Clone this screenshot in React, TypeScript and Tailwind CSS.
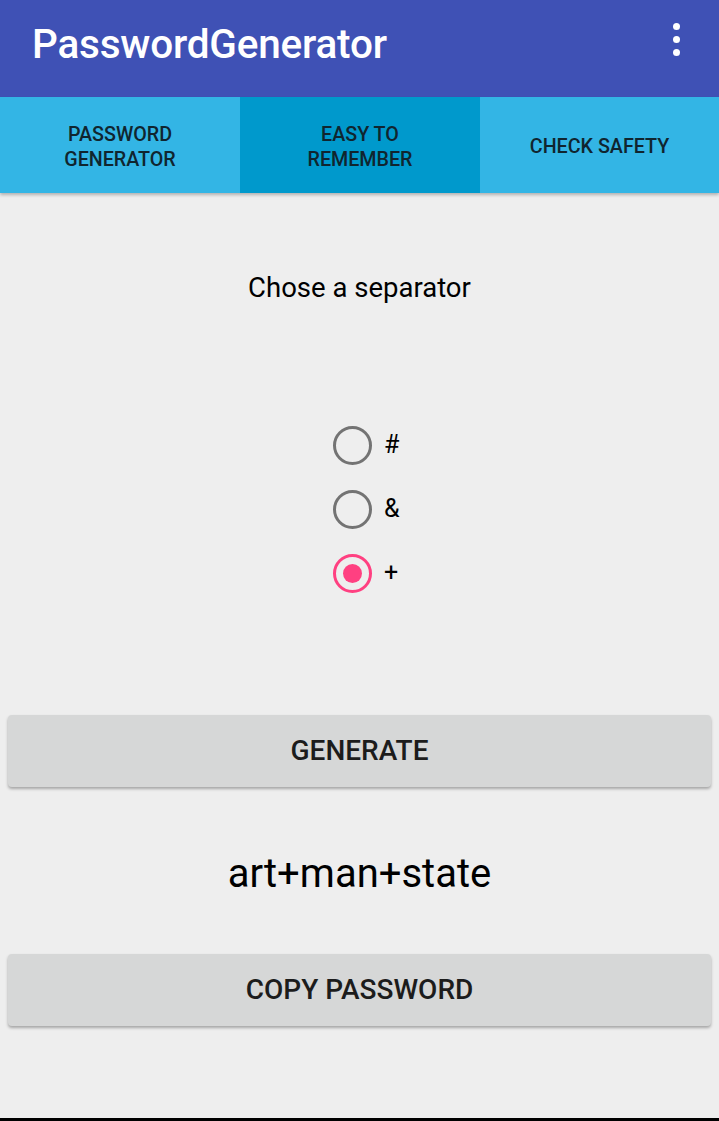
import { useState } from 'react';

const font = { fontFamily: 'Roboto, "Noto Sans", sans-serif' };

function Radio({ label, checked, onClick }: { label: string; checked: boolean; onClick: () => void }) {
  return (
    <button onClick={onClick} className="flex items-center h-16 gap-3">
      {checked ? (
        <span className="w-[39px] h-[39px] rounded-full border-[3px] border-[#FF4081] flex items-center justify-center">
          <span className="w-[19px] h-[19px] rounded-full bg-[#FF4081]" />
        </span>
      ) : (
        <span className="w-[39px] h-[39px] rounded-full border-[3px] border-[#737373]" />
      )}
      <span className="text-[25px] text-black w-6 text-left">{label}</span>
    </button>
  );
}

export default function App() {
  const [sep, setSep] = useState('+');
  const tabs = ['PASSWORD\nGENERATOR', 'EASY TO\nREMEMBER', 'CHECK SAFETY'];

  return (
    <div style={font} className="w-[719px] h-[1121px] bg-[#EEEEEE] flex flex-col overflow-hidden">
      <div className="h-[97px] bg-[#3F51B5] flex items-center justify-between pl-[32px] pr-[39px] pb-[8px]">
        <h1 className="text-white text-[40.5px] font-medium tracking-[-0.2px]">PasswordGenerator</h1>
        <div className="flex flex-col gap-[6px] mb-[10px]">
          <span className="w-[7px] h-[7px] rounded-full bg-white" />
          <span className="w-[7px] h-[7px] rounded-full bg-white" />
          <span className="w-[7px] h-[7px] rounded-full bg-white" />
        </div>
      </div>

      <div className="h-[96px] grid grid-cols-[240px_240px_239px] shadow-[0_2px_3px_rgba(0,0,0,0.25)] relative z-10">
        {tabs.map((t, i) => (
          <div
            key={t}
            className={`flex items-center justify-center text-center whitespace-pre-line text-[19.7px] leading-[25px] font-medium text-[#10252f] pt-[3px] ${
              i === 1 ? 'bg-[#0099CC]' : 'bg-[#33B5E5]'
            }`}
          >
            {t}
          </div>
        ))}
      </div>

      <div className="flex flex-col items-center">
        <p className="mt-[77px] text-[27.5px] leading-[36px] text-black">Chose a separator</p>

        <div className="mt-[107px] flex flex-col items-start ml-[22px]">
          {['#', '&', '+'].map((s) => (
            <Radio key={s} label={s} checked={sep === s} onClick={() => setSep(s)} />
          ))}
        </div>
      </div>

      <div className="px-[8px] mt-[110px]">
        <button className="w-full h-[72px] rounded-[4px] bg-[#D6D7D7] shadow-[0_2px_3px_rgba(0,0,0,0.3)] text-[28px] font-medium text-[#1c1c1c]">
          GENERATE
        </button>
      </div>

      <p className="text-center text-[40px] text-black mt-[63px] leading-[48px]">art{sep}man{sep}state</p>

      <div className="px-[8px] mt-[56px]">
        <button className="w-full h-[72px] rounded-[4px] bg-[#D6D7D7] shadow-[0_2px_3px_rgba(0,0,0,0.3)] text-[28px] font-medium text-[#1c1c1c]">
          COPY PASSWORD
        </button>
      </div>

      <div className="flex-1" />
      <div className="h-[3px] bg-black" />
    </div>
  );
}
